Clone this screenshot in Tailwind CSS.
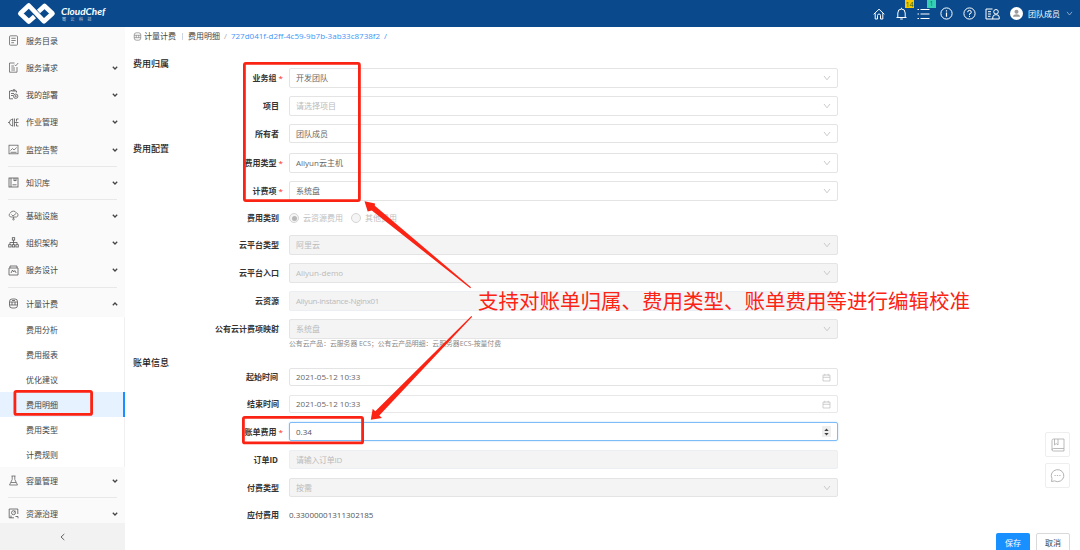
<!DOCTYPE html>
<html lang="zh-CN">
<head>
  <meta charset="UTF-8" />
  <title>CloudChef - 费用明细</title>
  <script src="https://cdn.jsdelivr.net/npm/@tailwindcss/browser@4"></script>
</head>
<body class="relative w-[1080px] h-[550px] overflow-hidden bg-white font-['Open_Sans','Noto_Sans_CJK_SC',sans-serif] text-[8px] leading-none text-[#444]">

  <!-- Iconos compartidos -->
  <svg class="hidden">
    <symbol id="caret" viewBox="0 0 6 4"><path d="M.8 .8L3 3L5.200 .8" fill="none" stroke="currentColor" stroke-width="1.300" /></symbol>
    <symbol id="down" viewBox="0 0 8 6"><path d="M1 1L4 4.800L7 1" fill="none" stroke="currentColor" stroke-width=".9" /></symbol>
    <symbol id="calendar" viewBox="0 0 9 9"><path d="M1 2H8V8H1ZM1 4.300H8M2.800 .8V2.800M6.200 .8V2.800" fill="none" stroke="currentColor" stroke-width=".7" /></symbol>
  </svg>

  <header class="flex h-[27px] items-center justify-between bg-[#0a4a8c] pl-[17px] pr-[7px] text-white">
    <div class="flex items-center gap-[6px]">
      <svg class="h-[23px] w-[39px]" viewBox="0 0 39 23" fill="none" stroke="#fff" stroke-width="4.600" stroke-linejoin="round">
        <path d="M17.500 14.500L11.800 19.500L3.300 11.500L11.800 3.500L27 19.300L35.500 11.500L27.500 4L21.500 9.500" />
      </svg>
      <div class="flex flex-col">
        <span class="-ml-px font-['Lato'] text-[10px] leading-[11px] font-bold italic">CloudChef</span>
        <span class="text-[4px] leading-[5px] tracking-[4.500px] opacity-70">骞云科技</span>
      </div>
    </div>
    <div class="flex items-center">
      <svg class="mr-[11px] size-[12px]" viewBox="0 0 12 12" fill="none" stroke="#fff" stroke-width="1"><path d="M.7 6.300L6 1.200L11.300 6.300M2.200 5.200V11H4.500V7.500A1.500 1.500 0 0 1 7.500 7.500V11H9.800V5.200" /></svg>
      <div class="relative mr-[10px] h-[13px] w-[11px]">
        <svg class="size-full" viewBox="0 0 11 13" fill="none" stroke="#fff" stroke-width="1"><path d="M.5 10.500H10.500M1.800 10.500V6A3.700 4 0 0 1 9.200 6V10.500M4.200 12H6.800M5.500 .8V2" /></svg>
        <span class="absolute -top-[7px] left-[9px] flex h-[8px] w-[9px] items-center justify-center bg-[#f7c600] text-[7px] text-[#24632f]">14</span>
      </div>
      <div class="relative mr-[10px] h-[12px] w-[13px]">
        <svg class="size-full" viewBox="0 0 13 12" fill="none" stroke="#fff" stroke-width="1.100"><path d="M3.500 1.500H12.500M3.500 6H12.500M3.500 10.500H12.500M.5 1.500H2M.5 6H2M.5 10.500H2" /></svg>
        <span class="absolute -top-[8px] left-[10px] flex h-[8px] w-[9px] items-center justify-center bg-[#36cfb4] text-[7px] text-[#107060]">1</span>
      </div>
      <svg class="mr-[10px] size-[13px]" viewBox="0 0 13 13" fill="none" stroke="#fff"><circle cx="6.500" cy="6.500" r="5.600" /><path d="M6.500 5.500V9.700M6.500 3.300V4.500" stroke-width="1.200" /></svg>
      <svg class="mr-[9px] size-[13px]" viewBox="0 0 13 13" fill="none" stroke="#fff"><circle cx="6.500" cy="6.500" r="5.600" /><path d="M4.700 5.200A1.800 1.700 0 1 1 6.500 6.800V8M6.500 8.900V10" /></svg>
      <svg class="mr-[10px] h-[12px] w-[15px]" viewBox="0 0 15 12" fill="none" stroke="#fff"><path d="M7.500 1H1V11H8M3 3.700H6M3 6H6M3 8.300H5.500" /><circle cx="11" cy="3.800" r="2.300" /><path d="M7.800 11V9A2.500 2.500 0 0 1 10.300 6.800H11.700A2.500 2.500 0 0 1 14.200 9V11Z" /></svg>
      <svg class="mr-[5px] size-[13px]" viewBox="0 0 13 13"><circle cx="6.500" cy="6.500" r="6.500" fill="#fff" /><circle cx="6.500" cy="4.800" r="2" fill="#9a9a9a" /><path d="M3 9.800Q3 7.300 6.500 7.300T10 9.800Z" fill="#9a9a9a" /></svg>
      <span class="mr-[6px]">团队成员</span>
      <svg class="h-[5px] w-[7px] text-[#a9c0da]"><use href="#down" /></svg>
    </div>
  </header>

  <div class="flex h-[523px]">

    <!-- Menú lateral -->
    <aside class="flex w-[125px] shrink-0 flex-col bg-[#fafafa]">
      <nav class="h-[496px] overflow-hidden [&_svg]:shrink-0">
        <a class="flex h-[27px] items-center pl-[8px] pr-[7px]">
          <svg class="mr-[7px] size-[11px]" viewBox="0 0 11 11" fill="none" stroke="#666" stroke-width=".8"><rect x="1.500" y=".8" width="8" height="9.400" rx="1" /><path d="M3.300 3.300H7.700M3.300 5.500H7.700M3.300 7.700H6" /></svg>
          <span class="flex-1">服务目录</span>
        </a>
        <a class="flex h-[27px] items-center pl-[8px] pr-[7px]">
          <svg class="mr-[7px] size-[11px]" viewBox="0 0 11 11" fill="none" stroke="#666" stroke-width=".8"><path d="M6.500 1H1.500V10.200H9V5M3.300 4H6M3.300 6H7M3.300 8H7M6.500 2.700L7.700 3.900L10.200 1" /></svg>
          <span class="flex-1">服务请求</span><svg class="h-[4px] w-[6px]"><use href="#caret" /></svg>
        </a>
        <a class="flex h-[27px] items-center pl-[8px] pr-[7px]">
          <svg class="mr-[7px] size-[11px]" viewBox="0 0 11 11" fill="none" stroke="#555" stroke-width=".8"><path d="M8.500 3.500V2H3.500V1M3 2H1.500V9.800H5M5 2V.8H7V2M3 4.500H6M3 6.500H5" /><circle cx="7.700" cy="7.200" r="2.200" /><circle cx="7.700" cy="7.200" r=".6" /></svg>
          <span class="flex-1">我的部署</span><svg class="h-[4px] w-[6px]"><use href="#caret" /></svg>
        </a>
        <a class="flex h-[28px] items-center pl-[8px] pr-[7px]">
          <svg class="mr-[7px] size-[11px]" viewBox="0 0 11 11" fill="none" stroke="#555" stroke-width=".8"><path d="M4.700 1.500V9.500M4.700 2.500H3.500Q1.500 3 1.500 5.500T3.500 8.500H4.700M0 5.500H1.500M6.500 1.500V9.500M6.500 5.500H10.500M10.500 2H8.500V4.500M8.500 6.500V9H10.500" /></svg>
          <span class="flex-1">作业管理</span><svg class="h-[4px] w-[6px]"><use href="#caret" /></svg>
        </a>
        <a class="flex h-[27px] items-center pl-[8px] pr-[7px]">
          <svg class="mr-[7px] size-[11px]" viewBox="0 0 11 11" fill="none" stroke="#666" stroke-width=".8"><rect x="1" y="1.200" width="9" height="8.600" /><path d="M2.500 6.500L4.500 4.500L6 6L8.700 3.500M2.500 8.300H8.500" /></svg>
          <span class="flex-1">监控告警</span><svg class="h-[4px] w-[6px]"><use href="#caret" /></svg>
        </a>
        <div class="mx-[8px] mt-[3px] mb-[2px] h-px bg-[#e8e8e8]"></div>
        <a class="flex h-[27px] items-center pl-[8px] pr-[7px]">
          <svg class="mr-[7px] size-[11px]" viewBox="0 0 11 11" fill="none" stroke="#555" stroke-width=".8"><rect x="1" y="1" width="9" height="9" /><path d="M3 1V10M6 1V4L7 3.200L8 4V1M4.500 7.800H8.500" /></svg>
          <span class="flex-1">知识库</span><svg class="h-[4px] w-[6px]"><use href="#caret" /></svg>
        </a>
        <div class="mx-[8px] mt-[3px] mb-[2px] h-px bg-[#e8e8e8]"></div>
        <a class="flex h-[27px] items-center pl-[8px] pr-[7px]">
          <svg class="mr-[7px] size-[11px]" viewBox="0 0 11 11" fill="none" stroke="#666" stroke-width=".8"><path d="M3 7A2 2 0 0 1 2.300 3.200A3.200 3 0 0 1 8.300 2.900A2.100 2.100 0 0 1 8.500 7ZM3.500 4.500L5 6L8 3.500M5.500 7V8.500" /><circle cx="5.500" cy="9.200" r=".8" /></svg>
          <span class="flex-1">基础设施</span><svg class="h-[4px] w-[6px]"><use href="#caret" /></svg>
        </a>
        <a class="flex h-[27px] items-center pl-[8px] pr-[7px]">
          <svg class="mr-[7px] size-[11px]" viewBox="0 0 11 11" fill="none" stroke="#555" stroke-width=".8"><rect x="4.300" y=".7" width="2.400" height="2.400" /><rect x=".7" y="7.700" width="2.400" height="2.300" /><rect x="4.300" y="7.700" width="2.400" height="2.300" /><rect x="7.900" y="7.700" width="2.400" height="2.300" /><path d="M5.500 3V7.700M1.900 7.700V5.500H9.100V7.700" /></svg>
          <span class="flex-1">组织架构</span><svg class="h-[4px] w-[6px]"><use href="#caret" /></svg>
        </a>
        <a class="flex h-[28px] items-center pl-[8px] pr-[7px]">
          <svg class="mr-[7px] size-[11px]" viewBox="0 0 11 11" fill="none" stroke="#555" stroke-width=".8"><path d="M2 3V1H9V3M1 3H10V10H1ZM3 8L4.500 5L5.700 7L6.800 5.500L8.200 8" /></svg>
          <span class="flex-1">服务设计</span><svg class="h-[4px] w-[6px]"><use href="#caret" /></svg>
        </a>
        <div class="mx-[8px] mt-[3px] mb-[2px] h-px bg-[#e8e8e8]"></div>
        <a class="flex h-[27px] items-center pl-[8px] pr-[7px]">
          <svg class="mr-[7px] size-[11px]" viewBox="0 0 11 11" fill="none" stroke="#555" stroke-width=".8"><rect x="1.500" y="1" width="8" height="9" rx="2.500" /><path d="M1.500 4H9.500M1.500 7H9.500M4 4V7M7 4V7M4 2.500H7" /></svg>
          <span class="flex-1">计量计费</span><svg class="h-[4px] w-[6px] rotate-180"><use href="#caret" /></svg>
        </a>
        <div class="flex flex-col border-r border-[#f0f0f0] bg-white">
          <a class="flex h-[25px] items-center pl-[26px]">费用分析</a>
          <a class="flex h-[25px] items-center pl-[26px]">费用报表</a>
          <a class="flex h-[25px] items-center pl-[26px]">优化建议</a>
          <a class="-mr-px flex h-[25px] items-center border-r-2 border-[#1890ff] bg-[#e6f2ff] pl-[26px]">费用明细</a>
          <a class="flex h-[25px] items-center pl-[26px]">费用类型</a>
          <a class="flex h-[25px] items-center pl-[26px]">计费规则</a>
        </div>
        <a class="flex h-[27px] items-center pl-[8px] pr-[7px]">
          <svg class="mr-[7px] size-[11px]" viewBox="0 0 11 11" fill="none" stroke="#666" stroke-width=".8"><path d="M3.500 1H7.500M4.200 1V4.500L1.500 10H9.500L6.800 4.500V1M3 7.500H8" /></svg>
          <span class="flex-1">容量管理</span><svg class="h-[4px] w-[6px]"><use href="#caret" /></svg>
        </a>
        <div class="mx-[8px] mt-[3px] mb-[2px] h-px bg-[#e8e8e8]"></div>
        <a class="flex h-[27px] items-center pl-[8px] pr-[7px]">
          <svg class="mr-[7px] size-[11px]" viewBox="0 0 11 11" fill="none" stroke="#555" stroke-width=".8"><path d="M6 9.800H1.200V1H9.800V6M7.500 8.500H10V10.300M3 7.500V10" /><circle cx="5.500" cy="4.700" r="2" /><path d="M5.500 4.700L7.500 3" /></svg>
          <span class="flex-1">资源治理</span><svg class="h-[4px] w-[6px]"><use href="#caret" /></svg>
        </a>
      </nav>
      <div class="flex flex-1 items-center justify-center bg-[#f2f2f2]">
        <svg class="h-[8px] w-[5px]" viewBox="0 0 5 8" fill="none" stroke="#555" stroke-width=".9"><path d="M4.300 1L1 4L4.300 7" /></svg>
      </div>
    </aside>

    <main class="flex-1 pl-[8px]">
      <div class="flex h-[18px] items-center">
        <svg class="mr-[2px] size-[9px]" viewBox="0 0 11 11" fill="none" stroke="#777" stroke-width=".8"><rect x="1.500" y="1" width="8" height="9" rx="2.500" /><path d="M1.500 4H9.500M1.500 7H9.500M4 4V7M7 4V7" /></svg>
        <span>计量计费</span>
        <span class="mx-[5.500px] h-[7px] w-px bg-[#ccd6e6]"></span>
        <span>费用明细</span>
        <span class="mx-[4px] text-[#aaa]">/</span>
        <span class="text-[#4096f7]">727d041f-d2ff-4c59-9b7b-3ab33c8738f2</span>
        <span class="ml-[4px] text-[#4096f7]">/</span>
      </div>

      <!-- Pertenencia del gasto -->
      <section class="flex pt-[11px]">
        <h2 class="w-[70px] pt-[3px] text-[9px] font-medium leading-[9px] text-[#222]">费用归属</h2>
        <div class="flex w-[635px] flex-col gap-[8px] pt-[12px]">
          <div class="flex h-[20px] items-center">
            <label class="mr-[6px] w-[80px] whitespace-nowrap text-right font-bold text-[#333]">业务组 <span class="font-normal text-[#ff2a20]">*</span></label>
            <div class="flex h-full flex-1 items-center justify-between rounded-[2px] border border-[#e4e4e4] px-[6px] text-[#666]">开发团队<svg class="h-[6px] w-[8px] text-[#c4c4c4]"><use href="#down" /></svg></div>
          </div>
          <div class="flex h-[20px] items-center">
            <label class="mr-[10px] w-[76px] whitespace-nowrap text-right font-bold text-[#333]">项目</label>
            <div class="flex h-full flex-1 items-center justify-between rounded-[2px] border border-[#e4e4e4] px-[6px] text-[#bbb]">请选择项目<svg class="h-[6px] w-[8px] text-[#c4c4c4]"><use href="#down" /></svg></div>
          </div>
          <div class="flex h-[19px] items-center">
            <label class="mr-[10px] w-[76px] whitespace-nowrap text-right font-bold text-[#333]">所有者</label>
            <div class="flex h-full flex-1 items-center justify-between rounded-[2px] border border-[#e4e4e4] px-[6px] text-[#666]">团队成员<svg class="h-[6px] w-[8px] text-[#c4c4c4]"><use href="#down" /></svg></div>
          </div>
        </div>
      </section>

      <!-- Configuración del gasto -->
      <section class="flex">
        <h2 class="w-[70px] pt-px text-[9px] font-medium leading-[9px] text-[#222]">费用配置</h2>
        <div class="flex w-[635px] flex-col gap-[8px] pt-[10px]">
          <div class="flex h-[20px] items-center">
            <label class="mr-[6px] w-[80px] whitespace-nowrap text-right font-bold text-[#333]">费用类型 <span class="font-normal text-[#ff2a20]">*</span></label>
            <div class="flex h-full flex-1 items-center justify-between rounded-[2px] border border-[#e4e4e4] px-[6px] text-[#666]">Aliyun云主机<svg class="h-[6px] w-[8px] text-[#c4c4c4]"><use href="#down" /></svg></div>
          </div>
          <div class="flex h-[20px] items-center">
            <label class="mr-[6px] w-[80px] whitespace-nowrap text-right font-bold text-[#333]">计费项 <span class="font-normal text-[#ff2a20]">*</span></label>
            <div class="flex h-full flex-1 items-center justify-between rounded-[2px] border border-[#e4e4e4] px-[6px] text-[#666]">系统盘<svg class="h-[6px] w-[8px] text-[#c4c4c4]"><use href="#down" /></svg></div>
          </div>
          <div class="flex h-[18px] items-center">
            <label class="mr-[10px] w-[76px] whitespace-nowrap text-right font-bold text-[#333]">费用类别</label>
            <div class="flex items-center text-[#c0c0c0]">
              <span class="mr-[4px] flex size-[10px] items-center justify-center rounded-full border border-[#d5d5d5] bg-[#f5f5f5]"><i class="size-[5px] rounded-full bg-[#b8b8b8]"></i></span>云资源费用
              <span class="mr-[4px] ml-[8px] size-[10px] rounded-full border border-[#d5d5d5] bg-[#f5f5f5]"></span>其他费用
            </div>
          </div>
          <div class="flex h-[20px] items-center">
            <label class="mr-[10px] w-[76px] whitespace-nowrap text-right font-bold text-[#333]">云平台类型</label>
            <div class="flex h-full flex-1 items-center justify-between rounded-[2px] border border-[#e4e4e4] bg-[#f4f4f4] px-[6px] text-[#bbb]">阿里云<svg class="h-[6px] w-[8px] text-[#c4c4c4]"><use href="#down" /></svg></div>
          </div>
          <div class="flex h-[20px] items-center">
            <label class="mr-[10px] w-[76px] whitespace-nowrap text-right font-bold text-[#333]">云平台入口</label>
            <div class="flex h-full flex-1 items-center justify-between rounded-[2px] border border-[#e4e4e4] bg-[#f4f4f4] px-[6px] text-[#bbb]">Aliyun-demo<svg class="h-[6px] w-[8px] text-[#c4c4c4]"><use href="#down" /></svg></div>
          </div>
          <div class="flex h-[20px] items-center">
            <label class="mr-[10px] w-[76px] whitespace-nowrap text-right font-bold text-[#333]">云资源</label>
            <div class="flex h-full flex-1 items-center rounded-[2px] border border-[#ebeef2] bg-[#f4f4f5] px-[6px] tracking-[-0.3px] text-[#bbb]">Aliyun-instance-Nginx01</div>
          </div>
          <div class="flex h-[20px] items-center">
            <label class="mr-[10px] w-[76px] whitespace-nowrap text-right font-bold text-[#333]">公有云计费项映射</label>
            <div class="flex h-full flex-1 items-center justify-between rounded-[2px] border border-[#e4e4e4] bg-[#f4f4f4] px-[6px] text-[#bbb]">系统盘<svg class="h-[6px] w-[8px] text-[#c4c4c4]"><use href="#down" /></svg></div>
          </div>
          <p class="-mt-[8px] ml-[86px] h-[11px] whitespace-nowrap text-[6.830px] leading-[10px] text-[#888]">公有云产品：云服务器 ECS；公有云产品明细：云服务器ECS-按量付费</p>
        </div>
      </section>

      <!-- Datos de la factura -->
      <section class="flex pt-[8px]">
        <h2 class="w-[70px] text-[9px] font-medium leading-[9px] text-[#222]">账单信息</h2>
        <div class="flex w-[635px] flex-col gap-[9px] pt-[10px]">
          <div class="flex h-[18px] items-center">
            <label class="mr-[11px] w-[75px] whitespace-nowrap text-right font-bold text-[#333]">起始时间</label>
            <div class="flex h-full flex-1 items-center justify-between rounded-[2px] border border-[#e4e4e4] px-[6px] text-[#666]">2021-05-12 10:33<svg class="size-[9px] text-[#bbb]"><use href="#calendar" /></svg></div>
          </div>
          <div class="flex h-[18px] items-center">
            <label class="mr-[10px] w-[76px] whitespace-nowrap text-right font-bold text-[#333]">结束时间</label>
            <div class="flex h-full flex-1 items-center justify-between rounded-[2px] border border-[#e8e8e8] px-[6px] text-[#666]">2021-05-12 10:33<svg class="size-[9px] text-[#bbb]"><use href="#calendar" /></svg></div>
          </div>
          <div class="flex h-[19px] items-center">
            <label class="mr-[6px] w-[80px] whitespace-nowrap text-right font-bold text-[#333]">账单费用 <span class="font-normal text-[#ff2a20]">*</span></label>
            <div class="flex h-full flex-1 items-center justify-between rounded-[2px] border border-[#7dbcf7] px-[6px] text-[#555] shadow-[0_0_2px_#b5dafc]">0.34
              <span class="flex h-[11px] w-[9px] items-center justify-center bg-[#efefef]"><svg class="h-[8px] w-[5px]" viewBox="0 0 5 8" fill="#444"><path d="M.3 3L2.500 .5L4.700 3ZM.3 5L2.500 7.500L4.700 5Z" /></svg></span>
            </div>
          </div>
          <div class="flex h-[19px] items-center">
            <label class="mr-[11px] w-[75px] whitespace-nowrap text-right font-bold text-[#333]">订单ID</label>
            <div class="flex h-full flex-1 items-center rounded-[2px] border border-[#ebeef2] bg-[#f4f4f4] px-[6px] tracking-[-0.3px] text-[#bbb]">请输入订单ID</div>
          </div>
          <div class="flex h-[19px] items-center">
            <label class="mr-[10px] w-[76px] whitespace-nowrap text-right font-bold text-[#333]">付费类型</label>
            <div class="flex h-full flex-1 items-center justify-between rounded-[2px] border border-[#e4e4e4] bg-[#f4f4f4] px-[6px] text-[#bbb]">按需<svg class="h-[6px] w-[8px] text-[#c4c4c4]"><use href="#down" /></svg></div>
          </div>
          <div class="flex h-[18px] items-center">
            <label class="mr-[10px] w-[76px] whitespace-nowrap text-right font-bold text-[#333]">应付费用</label>
            <span class="text-[#555]">0.33000001311302185</span>
          </div>
        </div>
      </section>

      <div class="flex justify-end gap-[6px] pt-[9px] pr-[10px]">
        <button class="h-[20px] w-[34px] rounded-[2px] bg-[#1890ff] text-white">保存</button>
        <button class="h-[20px] w-[34px] rounded-[2px] border border-[#d9d9d9] bg-white">取消</button>
      </div>
    </main>
  </div>

  <!-- Botones flotantes -->
  <div class="absolute top-[432px] left-[1045px] flex flex-col gap-[6px]">
    <div class="flex size-[25px] items-center justify-center rounded-[2px] border border-[#eee] bg-white">
      <svg class="size-[14px]" viewBox="0 0 14 14" fill="none" stroke="#aaa" stroke-width=".8"><path d="M13 10.500V1H2.500Q1 1 1 2.500V12Q1 13 2.500 13H13V10.500H2.500Q1 10.500 1 12M3.500 1V7L5.200 5.500L7 7V1" /></svg>
    </div>
    <div class="flex size-[25px] items-center justify-center rounded-[2px] border border-[#eee] bg-white">
      <svg class="size-[15px]" viewBox="0 0 15 15" fill="none" stroke="#aaa" stroke-width=".9"><path d="M1.500 13.500L2 10.500A6.300 6 0 1 1 4.500 12.900Z" /><path d="M4.500 7.500H5.700M6.900 7.500H8.100M9.300 7.500H10.500" /></svg>
    </div>
  </div>

  <!-- Anotaciones -->
  <svg class="absolute inset-0 h-[550px] w-[1080px]" viewBox="0 0 1080 550" fill="none">
    <g stroke="#fb2314" stroke-width="2.800">
      <rect x="244.400" y="63.400" width="115" height="137.200" rx="1.500" />
      <rect x="243.400" y="417.400" width="119.200" height="25.500" rx="1.500" />
      <rect x="14.900" y="391.400" width="76.700" height="23" rx="1.500" />
    </g>
    <g fill="#fb2314">
      <path d="M364.500 201.200L375 203.500L374.800 205.800L471 287.300L470.300 288.200L371.800 210.500L367.700 211.500Z" />
      <path d="M370.800 419.800L372.700 408.800L375.300 411.300L471.300 316L472.200 316.800L379.300 415.600L382 417.900Z" />
    </g>
  </svg>
  <div class="absolute top-[288px] left-[478px] whitespace-nowrap font-['Noto_Sans_CJK_SC',sans-serif] text-[20.500px] leading-[24px] text-[#fb2314]">支持对账单归属、费用类型、账单费用等进行编辑校准</div>

</body>
</html>
